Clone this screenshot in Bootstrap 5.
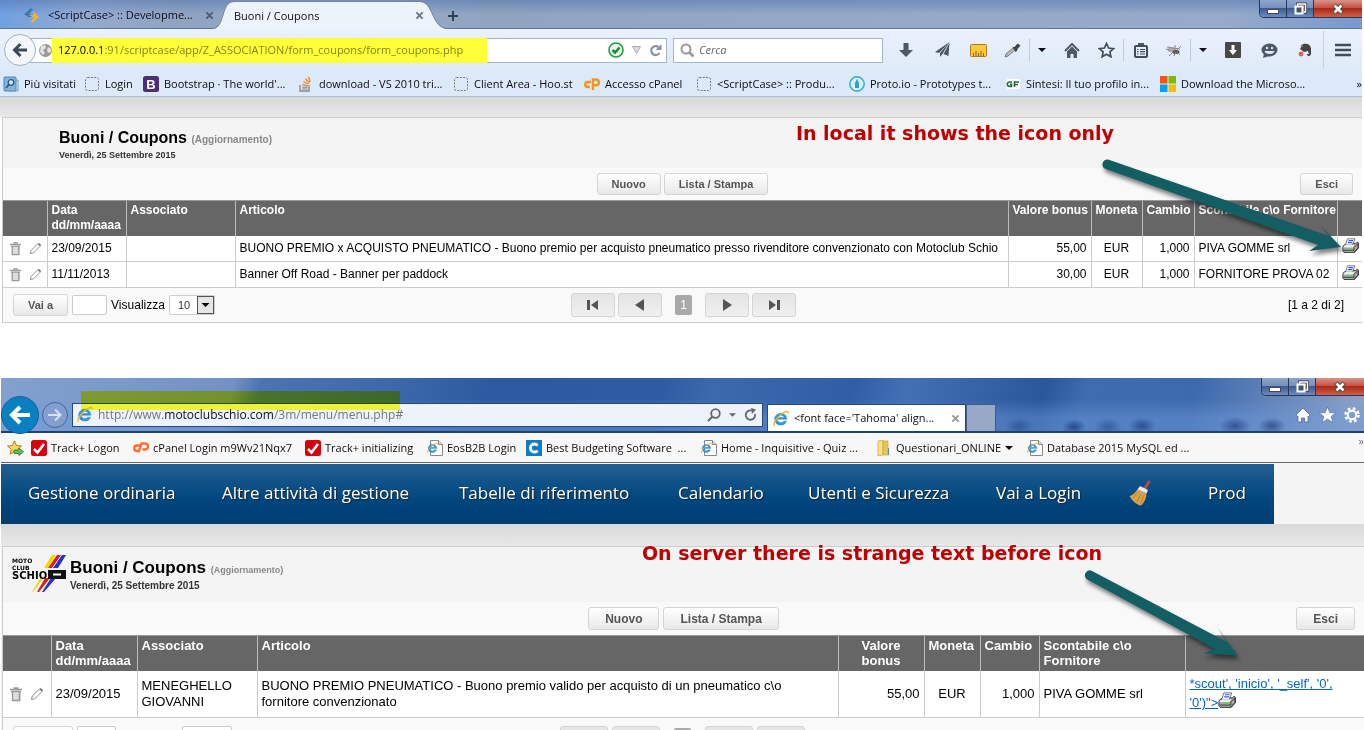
<!DOCTYPE html>
<html lang="it">
<head>
<meta charset="utf-8">
<meta name="viewport" content="width=device-width, initial-scale=1">
<title>Buoni / Coupons</title>
<link href="https://cdn.jsdelivr.net/npm/bootstrap@5.3.0/dist/css/bootstrap.min.css" rel="stylesheet">
<style>
body{background:#fff;color:#000;font-family:"Liberation Sans",Arial,sans-serif;font-size:12px;line-height:15px;height:100vh;overflow:hidden;display:flex;flex-direction:column}
button{border:0;background:none;padding:0;color:inherit;font:inherit}
svg{display:block;flex:none}
.chrome{font-family:"Open Sans","Noto Sans",sans-serif;font-size:11px;line-height:16px;color:#0c0c14}
.chrome a,.crumbs a{color:inherit;text-decoration:none;white-space:nowrap}
/* window buttons */
.winbtns{position:absolute;top:0;right:0;display:flex;height:18px;border:1px solid #27375c;border-top:0;border-right:0;border-radius:0 0 0 5px;overflow:hidden}
.winbtns button{width:27px;display:flex;align-items:center;justify-content:center;background:linear-gradient(#8fa6cc,#7690bd 45%,#3f5c92 50%,#6d8bbd);border-right:1px solid #27375c}
.winbtns button.closer{width:48px;background:linear-gradient(#d9958c,#c8503f 45%,#a92a18 50%,#d0604a);border:0}
/* first browser */
.fx{margin-right:2px;flex:none}
.fx-title{height:29px;background:linear-gradient(rgba(70,105,165,.45),rgba(150,170,200,0) 50%),linear-gradient(90deg,#6fa0e2,#93abd0 6%,#8ea3c0 14%,#9cb0cf 22%,#8ea4bf 36%,#93a9c6 60%,#95abc9 90%,#7898cf);border-bottom:1px solid #5d7794}
.fx-tab1{width:222px;padding:2px 0 0 24px}
.fx-tab2{width:218px;padding:2px 16px 0 12px;height:29px;margin-bottom:-1px}
.fx-tab2>svg{position:absolute;left:-10px;top:1px}
.fx-nav{height:42px;background:linear-gradient(#e9f1fb,#dfeaf8);padding-left:4px}
.fx-back{width:32px;height:32px;border-radius:50%;border:1px solid #9db0c6;background:#f3f7fc;display:flex;align-items:center;justify-content:center;z-index:1}
.fx-url{flex:1 1 0;height:25px;margin-left:-6px;border:1px solid #a3b5cb;background:#fff}
.fx-mark{background:#ffff3a;height:25px;width:435px;padding-left:6px;color:#000}
.fx-mark input{color:#84841a}
.bare{border:0;background:none;padding:0;outline:0;font:inherit;min-width:0;flex:1}
.fx-search{width:210px;height:25px;border:1px solid #a3b5cb;background:#fff;margin:0 5px 0 6px;padding-left:6px}
.fx-search input::placeholder{color:#666;font-style:italic;opacity:1}
.fx-icons button{height:22px;width:36px;display:flex;align-items:center;justify-content:center}
.fx-icons .narrow{width:33px}
.fx-icons .drop{width:25px;border-left:1px solid #bccadb}
.fx-icons .burger{width:39px;height:38px;border-left:1px solid #c6d3e3}
.fx-marks{height:26px;display:grid;grid-template-columns:81px 59px 155px 155px 131px 112px 153px 156px 155px 1fr auto;align-items:center;padding-left:3px;background:#dce9f8;border-bottom:1px solid #a9bdd4}
.bm{display:flex;align-items:center;gap:5px;white-space:nowrap}
.bm.ie-bm{gap:4px}
/* application panel */
.strip{height:20px;background:linear-gradient(#d9d9d9,#e8e8e8)}
.ie .strip{height:22px}
.panel{margin-left:2px;border:1px solid #ccc;border-right:0;background:#f9f9f9}
.panel-top{height:50px;background:#f4f4f4;padding:11px 0 0 56px}
.ie .panel-top{height:55px;padding:7px 0 0 9px}
.panel-top h1{font-size:16px;line-height:17px;font-weight:bold;margin:0}
.panel-top h1 small{font-size:10px;color:#888}
.panel-top p{font-size:9px;line-height:14px;font-weight:bold;color:#333;margin:0}
.ie .panel-top h1{font-size:17px;line-height:18px;padding-top:5px}
.ie .panel-top h1 small{font-size:9px}
.ie .panel-top p{font-size:10px}
.actions{height:32px;gap:3px}
.ie .actions{height:33px;gap:4px}
.gbtn{height:22px;border:1px solid #d4d4d4;border-radius:3px;background:linear-gradient(#fff,#e8e8e8);font-weight:bold;font-size:11px;color:#555;padding:0 14px;line-height:20px}
.ie .gbtn{height:23px;font-size:12px;padding:0 16px}
.leave{position:absolute;right:9px}
.grid-t{width:100%;table-layout:fixed;border-collapse:collapse;background:#fff;margin:0}
.grid-t th{background:#666;color:#fff;height:35px;padding:2px 4px 0;vertical-align:top;border-left:1px solid #bbb;border-top:1px solid #999;font-weight:bold}
.grid-t td{height:26px;padding:0 4px;border-left:1px solid #ccc;border-bottom:1px solid #ccc}
.grid-t td:first-child,.grid-t th:first-child{border-left:0}
.ie .grid-t{font-size:13px}
.ie .grid-t td{height:47px;line-height:16px}
.tools{display:flex;gap:7px;padding-left:2px}
.foot{height:34px;padding:0 0 0 10px}
.foot input,.pick{height:20px;width:35px;border:1px solid #ccc;border-radius:2px;background:#fff}
.pick{width:46px;position:relative}
.pick select{appearance:none;border:0;background:none;width:44px;height:18px;padding:0 0 0 8px;font-size:11px;color:#333}
.pick svg{position:absolute;right:0;top:0;pointer-events:none}
.nav-b{width:44px;height:24px;border:1px solid #d4d4d4;border-radius:3px;background:linear-gradient(#e4e4e4,#f0f0f0);display:flex;align-items:center;justify-content:center}
.page-no{width:17px;height:20px;border-radius:2px;background:#a9a9a9;color:#fff;text-align:center;line-height:20px;margin:0 10px}
.pager{position:absolute;left:568px;gap:3px}
.ie .pager{left:557px;gap:4px}
.ie .nav-b{width:48px}
.ie .foot input{width:39px}
.ie .foot .pick{width:50px;margin-left:66px;appearance:none}
/* second browser */
.ie{margin:55px 0 0 1px;flex:1 1 0;min-height:0;overflow:hidden;background:#f4f4f4}
.ie-title{height:55px;padding-top:20px;border-bottom:2px solid #20406f;background:
 radial-gradient(ellipse 14px 9px at 1018px 48px,rgba(30,60,120,.5),transparent),
 radial-gradient(ellipse 12px 8px at 1073px 49px,rgba(20,50,120,.7),transparent),
 radial-gradient(ellipse 14px 9px at 1107px 49px,rgba(30,60,120,.5),transparent),
 radial-gradient(ellipse 14px 9px at 1141px 48px,rgba(20,50,110,.6),transparent),
 radial-gradient(ellipse 16px 9px at 1234px 48px,rgba(20,50,110,.6),transparent),
 radial-gradient(ellipse 14px 9px at 1271px 48px,rgba(20,50,110,.6),transparent),
 linear-gradient(transparent 40%,rgba(110,155,220,.45) 75%),
 linear-gradient(105deg,#83a1cf,#7391c4 17%,#4a74b3 19%,#3e69ac 28%,#2b5aa0 36%,#2d5ca3 48%,#3b69ad 52%,#2f5ea6 62%,#4370b5 66%,#2a579c 76%,#3e6cb0 79%,#3d6aae 87%,#8ba0c4 99%)}
.ie-back{width:38px;height:38px;border-radius:50%;background:#0a80c2;border:1px solid #1b5d98;display:flex;align-items:center;justify-content:center}
.ie-fwd{width:26px;height:26px;border-radius:50%;border:1px solid #49659a;background:#829fd0;display:flex;align-items:center;justify-content:center;margin:0 4px 0 3px}
.ie-url{flex:1 1 0;height:24px;border:1px solid #24497f;background:#edf2fb;padding:0 5px 0 4px;font-size:12px;color:#777}
.ie-url b{font-weight:normal;color:#111}
.ie-tab{width:199px;height:27px;margin-left:4px;background:#fff;border:1px solid #24497f;border-bottom:0;align-self:flex-end;padding:0 5px}
.ie-new{width:30px;height:27px;background:#98a9c7;border:1px solid #3c5d92;border-bottom:0;align-self:flex-end}
.ie-side{width:368px;gap:8px;padding-right:4px}
.ie-mark{position:absolute;left:80px;top:13px;width:319px;height:19px;background:#ffff3a;mix-blend-mode:multiply;pointer-events:none}
.ie-marks{height:30px;background:#f7f7f7;border-bottom:1px solid #666;display:grid;grid-template-columns:24px 102px 172px 122px 99px 175px 175px 151px 1fr auto;align-items:center;padding-left:6px}
.crumbs{width:1273px;max-width:100%;height:60px;margin-top:1px;background:linear-gradient(#225f90,#00467e 60%,#003e70);display:grid;grid-template-columns:194px 237px 219px 130px 188px 132px 80px 1fr;align-items:center;padding:0 0 3px 27px;font-family:"Open Sans","Noto Sans",sans-serif;font-size:17px;line-height:24px;color:#fff;text-shadow:1px 1px 1px #222}
/* annotations */
.callout{position:absolute;font-family:"DejaVu Sans",Verdana,sans-serif;font-weight:bold;font-size:19px;line-height:24px;color:#c00000;white-space:nowrap;z-index:2}
.pointer{position:absolute;z-index:2;pointer-events:none;filter:drop-shadow(2px 4px 2px rgba(0,0,0,.5))}
.weird{color:#0563c1;text-decoration:underline}
.weird svg{display:inline-block;vertical-align:-2px}
</style>
</head>
<body>
<svg width="0" height="0" class="position-absolute" aria-hidden="true">
<defs>
<symbol id="x" viewBox="0 0 10 10"><path d="M1.5 1.5l7 7M8.500 1.500l-7 7" stroke="currentColor" stroke-width="2.200"/></symbol>
<symbol id="blank" viewBox="0 0 16 16"><rect x="1.500" y="1.500" width="13" height="13" rx="2" fill="none" stroke="#777" stroke-dasharray="2 1.300"/></symbol>
<symbol id="trash" viewBox="0 0 14 16"><path d="M3 5h9v9H3z" fill="#ddd"/><path d="M1 3.500h12M4.500 2h5M2 5.500h10M3.500 6v8.500h7V6" fill="none" stroke="#999" stroke-width="1.400"/></symbol>
<symbol id="pencil" viewBox="0 0 14 14"><path d="M1.500 12.500l.8-3.500L9.500 2l2.500 2.500-7.300 7.300z" fill="#fff" stroke="#888"/><path d="M9.500 2l1.300-1 2.400 2.300L12 4.500z" fill="#777"/></symbol>
<symbol id="printer" viewBox="0 0 17 16"><path d="M1 8l3.500-2.500h9L15.500 4l1 1.500V10l-4 4.500H2L.8 13z" fill="#aaa" stroke="#222" stroke-width=".8"/><path d="M5.500.8h7.500L10.500 7H3.500z" fill="#fff" stroke="#444" stroke-width=".7"/><path d="M6.500 2.600h4.500M5.800 4.600h4.500" stroke="#25f" stroke-width="1.100"/><path d="M1.500 8.500l2.500-1.700h8.500l-1.500 2.700H1.500z" fill="#eee"/><path d="M1.500 12.300h10.500V9.500L16 5.500V10l-4 4" fill="none" stroke="#333" stroke-width=".9"/><path d="M6.500 10.900h3.500" stroke="#2e2" stroke-width="1.300"/></symbol>
<symbol id="e" viewBox="0 0 18 18"><path d="M14.600 9.900H4.400c.1 2 1.700 3.400 3.700 3.400 1.400 0 2.600-.6 3.300-1.500h3c-1 2.700-3.400 4.200-6.200 4.200C4.500 16 1.700 13.200 1.700 9.700S4.600 3.400 8.300 3.400c3.800 0 6.400 2.700 6.300 6.500zM11.800 8c-.3-1.500-1.700-2.500-3.400-2.500S5.100 6.500 4.600 8z" fill="#2d9be0" stroke="#1673b5" stroke-width=".4"/><path d="M1.600 16.600C-.4 14.300 5 6.600 10.500 3.200c3.300-2 6.200-2.400 5.400.6" fill="none" stroke="#f0b429" stroke-width="1.500"/></symbol>
<symbol id="epage" viewBox="0 0 16 16"><path d="M3.500.5h8l4 4v11h-12z" fill="#fff" stroke="#888"/><path d="M11.500.5v4h4" fill="#ddd" stroke="#888"/><use href="#e" x="0" y="2" width="12" height="12"/></symbol>
<symbol id="track" viewBox="0 0 16 16"><rect width="16" height="16" rx="2.500" fill="#d6000f"/><path d="M3 9l3.500 3.500L13 4" fill="none" stroke="#fff" stroke-width="2.600"/></symbol>
<symbol id="caret" viewBox="0 0 8 4"><path d="M0 0h8L4 4z" fill="currentColor"/></symbol>
<symbol id="wmin" viewBox="0 0 14 14"><rect x="1.500" y="7.500" width="11" height="4" fill="#fff" stroke="#445"/></symbol>
<symbol id="wres" viewBox="0 0 14 14"><path d="M4.500 4V2h8v8h-2" fill="none" stroke="#334" stroke-width="3"/><path d="M4.500 4V2h8v8h-2" fill="none" stroke="#fff" stroke-width="1.500"/><rect x="2.500" y="4.500" width="7" height="7" fill="#456" stroke="#fff" stroke-width="2"/></symbol>
<symbol id="wx" viewBox="0 0 14 14"><path d="M3 3l8 8M11 3l-8 8" stroke="#444" stroke-width="4.500"/><path d="M3.500 3.500l7 7M10.500 3.500l-7 7" stroke="#fff" stroke-width="2.600"/></symbol>
<symbol id="first" viewBox="0 0 12 12"><path d="M0 1h3v10H0zM11 1v10L4 6z" fill="#555"/></symbol>
<symbol id="prev" viewBox="0 0 12 12"><path d="M10 0v12L1 6z" fill="#555"/></symbol>
</defs>
</svg>

<section class="fx">
 <div class="chrome">
  <div class="fx-title d-flex position-relative">
   <div class="fx-tab1 d-flex align-items-center"><svg width="16" height="16" viewBox="0 0 16 16"><path d="M7 1l2 2-4 4 5 1-1 2H4L0 7z" fill="#3c79b8"/><path d="M9 4l6 6-7 6-1-2 3-3-5-3h5z" fill="#f5b32b"/></svg><a href="#" class="ms-2 me-auto ps-0">&lt;ScriptCase&gt; :: Developme...</a><button aria-label="Chiudi scheda" class="me-2" style="color:#4e5f74"><svg width="9" height="9"><use href="#x"/></svg></button></div>
   <div class="fx-tab2 d-flex align-items-center position-relative">
    <svg width="238" height="29" viewBox="0 0 238 29" aria-hidden="true"><path d="M0 28C14 28 8 1 22 1H208C222 1 219 28 236 28V29H0z" fill="#edf3fb"/><path d="M0 27.500C14 27.500 8 .5 22 .5H208C222 .5 219 27.500 236 27.500" fill="none" stroke="#6f87a5"/></svg>
    <a href="#" class="position-relative me-auto">Buoni / Coupons</a><button aria-label="Chiudi scheda" class="position-relative" style="color:#707b88"><svg width="9" height="9"><use href="#x"/></svg></button></div>
   <button aria-label="Nuova scheda" class="ms-2 pt-1"><svg width="10" height="10" viewBox="0 0 10 10"><path d="M5 0v10M0 5h10" stroke="#33404e" stroke-width="2"/></svg></button>
   <div class="winbtns"><button aria-label="Riduci"><svg width="14" height="14"><use href="#wmin"/></svg></button><button aria-label="Ripristina"><svg width="14" height="14"><use href="#wres"/></svg></button><button class="closer" aria-label="Chiudi"><svg width="14" height="14"><use href="#wx"/></svg></button></div>
  </div>
  <div class="fx-nav d-flex align-items-center">
   <button class="fx-back" aria-label="Indietro"><svg width="16" height="16" viewBox="0 0 16 16"><path d="M15 8H3M8.500 2L2.500 8l6 6" fill="none" stroke="#3c4a58" stroke-width="3"/></svg></button>
   <div class="fx-url d-flex align-items-center ps-2">
    <svg width="13" height="13" viewBox="0 0 13 13"><circle cx="6.500" cy="6.500" r="6.500" fill="#999"/><path d="M2 2l4-1 1 3-3 2 2 3-2 2-3-3zM9 3l3 2v3l-3 1-1-3z" fill="#e4e4e4"/></svg>
    <div class="fx-mark d-flex align-items-center"><label for="u1">127.0.0.1</label><input id="u1" class="bare" value=":91/scriptcase/app/Z_ASSOCIATION/form_coupons/form_coupons.php"></div>
    <svg class="ms-auto" width="16" height="16" viewBox="0 0 16 16"><circle cx="8" cy="8" r="7" fill="#e9f8ec" stroke="#1a9e3f" stroke-width="1.600"/><path d="M4.500 8L7 10.500l4.500-5" fill="none" stroke="#1a8f35" stroke-width="2.600"/></svg>
    <svg class="mx-2" width="9" height="8" viewBox="0 0 9 8"><path d="M.5.500h8l-4 7z" fill="#d9dde3" stroke="#aab"/></svg>
    <button aria-label="Ricarica" class="me-1"><svg width="13" height="13" viewBox="0 0 13 13"><path d="M10.500 9A4.500 4.500 0 1 1 9.500 3" fill="none" stroke="#8a93a0" stroke-width="2.200"/><path d="M12.500 0v6h-6z" fill="#8a93a0"/></svg></button>
   </div>
   <div class="fx-search d-flex align-items-center"><svg class="me-1" width="15" height="15" viewBox="0 0 15 15"><circle cx="6" cy="6" r="4.500" fill="none" stroke="#999" stroke-width="2"/><path d="M9.500 9.500l4 4" stroke="#999" stroke-width="2.600"/></svg><input class="bare" aria-label="Cerca" placeholder="Cerca"></div>
   <div class="fx-icons d-flex align-items-center">
    <button aria-label="Download"><svg width="14" height="15" viewBox="0 0 14 15"><path d="M4.500 0h5v7H14l-7 7-7-7h4.500z" fill="#4d5864"/></svg></button>
    <button aria-label="Invia"><svg width="15" height="16" viewBox="0 0 15 16"><path d="M14.500 0L0 10l4 1zM14.500 0L5 11v4l2.500-3zM14.500 1l-6 11 5 2z" fill="#4d5864"/></svg></button>
    <button aria-label="Righello"><svg width="17" height="13" viewBox="0 0 17 13"><rect x=".5" y=".5" width="16" height="12" rx="1" fill="#fbc83c" stroke="#a87a24"/><path d="M3.500 12V9M6 12V7M8.500 12V9M11 12V7M13.500 12V9" stroke="#8a641d"/></svg></button>
    <button class="narrow" aria-label="Contagocce"><svg width="17" height="15" viewBox="0 0 17 15"><path d="M1 14l1-3 7-6 2 2-7 6z" fill="#bbb" stroke="#777"/><path d="M8.500 4l2 0 3-3.500 3 2-3 3.500-.5 2-1.500 1z" fill="#444"/></svg></button>
    <button class="drop" aria-label="Menu"><svg width="8" height="4"><use href="#caret"/></svg></button>
    <button aria-label="Home"><svg width="16" height="15" viewBox="0 0 16 15"><path d="M1 8l7-7 7 7" fill="none" stroke="#4d5864" stroke-width="2"/><path d="M3 8.500l5-5 5 5V15H9.500v-4h-3v4H3z" fill="#4d5864"/></svg></button>
    <button class="narrow" aria-label="Preferiti"><svg width="17" height="16" viewBox="0 0 17 16"><path d="M8.500 1.500l2.100 4.500 5 .6-3.700 3.300 1 4.900-4.400-2.500-4.400 2.500 1-4.900L1.400 6.600l5-.6z" fill="#e6eef8" stroke="#414c58" stroke-width="1.700"/></svg></button>
    <button class="drop" style="width:34px" aria-label="Elenco"><svg width="14" height="15" viewBox="0 0 14 15"><path d="M4 0h6v3H4z" fill="#4d5864"/><rect x="1" y="3" width="12" height="11" rx="1" fill="none" stroke="#414c58" stroke-width="2"/><path d="M3 6.500h1.500M6 6.500h5M3 8.700h1.500M6 8.700h5M3 11h1.500M6 11h5" stroke="#414c58" stroke-width="1.200"/></svg></button>
    <button class="narrow" aria-label="Debug"><svg width="16" height="13" viewBox="0 0 16 13"><ellipse cx="6" cy="6" rx="4.500" ry="2.200" fill="#aaa"/><ellipse cx="10" cy="8" rx="3.500" ry="2" fill="#555"/><path d="M1 3l13 2M3 12l4-4M8 12l2-4M9 1v4M14 11l-3-3M15 2l-4 4M0 5l4 1" stroke="#888"/></svg></button>
    <button class="drop" aria-label="Menu"><svg width="8" height="4"><use href="#caret"/></svg></button>
    <button aria-label="Scarica"><svg width="16" height="16" viewBox="0 0 16 16"><rect width="16" height="16" rx="1" fill="#484848"/><path d="M6.500 3h3v5H12l-4 5-4-5h2.500z" fill="#fff"/></svg></button>
    <button aria-label="Chat"><svg width="17" height="15" viewBox="0 0 17 15"><ellipse cx="8.500" cy="7" rx="8" ry="6.500" fill="#4d5864"/><path d="M3 11l-1 4 6-2z" fill="#4d5864"/><circle cx="6" cy="5" r="1.200" fill="#dce9f8"/><circle cx="11" cy="5" r="1.200" fill="#dce9f8"/><path d="M3.500 8h10c-1 4-9 4-10 0z" fill="#dce9f8"/></svg></button>
    <button aria-label="Evernote"><svg width="14" height="14" viewBox="0 0 14 14"><path d="M5 1c4-1 7 0 8 4v5c0 4-4 4-4 1h2l-1-3-4 1-4-3z" fill="#444"/><circle cx="3" cy="11" r="2.400" fill="#e0604a"/><path d="M2 3l3-2v3z" fill="#777"/></svg></button>
    <button class="burger" aria-label="Apri menu"><svg width="16" height="14" viewBox="0 0 16 14"><path d="M0 2h16M0 7h16M0 12h16" stroke="#414c58" stroke-width="2.600"/></svg></button>
   </div>
  </div>
  <div class="fx-marks">
   <a class="bm" href="#"><svg width="16" height="16" viewBox="0 0 16 16"><rect x="1" y="1" width="12" height="14" rx="1" fill="#84b5d8" stroke="#4b86b4"/><path d="M13 4h2v11H6" fill="none" stroke="#6aa0c8"/><circle cx="8" cy="6.500" r="2.800" fill="#cfe6f6" stroke="#235d8a" stroke-width="1.300"/><path d="M6 8.500L3 12" stroke="#235d8a" stroke-width="1.700"/></svg>Più visitati</a>
   <a class="bm" href="#"><svg width="16" height="16"><use href="#blank"/></svg>Login</a>
   <a class="bm" href="#"><svg width="16" height="16" viewBox="0 0 16 16"><rect width="16" height="16" rx="2.500" fill="#4d2d76"/><text x="8" y="13" text-anchor="middle" font-family="Liberation Sans" font-weight="bold" font-size="13" fill="#fff">B</text></svg>Bootstrap · The world'...</a>
   <a class="bm" href="#"><svg width="16" height="16" viewBox="0 0 16 16"><path d="M2 9v6h9V9" fill="none" stroke="#888" stroke-width="1.300"/><path d="M4 13h5.500M4 11l5.500.4" stroke="#888" stroke-width="1.200"/><path d="M4.300 8.300l5.400 1.500M5.400 5.500l4.900 2.800M7.500 2.800l3.800 4.200M10.500 1l1.800 5" stroke="#f48024" stroke-width="1.300"/></svg>download - VS 2010 tri...</a>
   <a class="bm" href="#"><svg width="16" height="16"><use href="#blank"/></svg>Client Area - Hoo.st</a>
   <a class="bm" href="#"><svg width="16" height="16" viewBox="0 0 16 16"><path d="M7 6H3.800a2.200 2.200 0 0 0 0 5H6M9 14V3.500h3a2.800 2.800 0 0 1 0 5.700H9" fill="none" stroke="#f7931e" stroke-width="2.500"/></svg>Accesso cPanel</a>
   <a class="bm" href="#"><svg width="16" height="16"><use href="#blank"/></svg>&lt;ScriptCase&gt; :: Produ...</a>
   <a class="bm" href="#"><svg width="16" height="16" viewBox="0 0 16 16"><circle cx="8" cy="8" r="7.200" fill="#d5eff7" stroke="#35a8c8" stroke-width="1.400"/><path d="M6 12V7l2-4 2 4v5z" fill="#2f9ec0"/></svg>Proto.io - Prototypes t...</a>
   <a class="bm" href="#"><svg width="16" height="16" viewBox="0 0 16 16"><rect x="1" y="3" width="14" height="10" rx="2" fill="#fff"/><path d="M7 6H4.500a2 2 0 0 0 0 4.300H6.500V8.300H5M9.500 11V6H14M9.500 8.500h3.500" fill="none" stroke="#2d6b38" stroke-width="1.700"/></svg>Sintesi: Il tuo profilo in...</a>
   <a class="bm" href="#"><svg width="16" height="16" viewBox="0 0 16 16"><path d="M0 0h7.500v7.500H0z" fill="#f65314"/><path d="M8.500 0H16v7.500H8.500z" fill="#7cbb00"/><path d="M0 8.500h7.500V16H0z" fill="#00a1f1"/><path d="M8.500 8.500H16V16H8.500z" fill="#ffbb00"/></svg>Download the Microso...</a>
   <a href="#">»</a>
  </div>
 </div>
 <div class="strip"></div>
 <div class="panel position-relative">
  <div class="panel-top"><h1>Buoni / Coupons <small>(Aggiornamento)</small></h1><p>Venerdì, 25 Settembre 2015</p></div>
  <div class="actions d-flex justify-content-center align-items-center position-relative"><button class="gbtn">Nuovo</button><button class="gbtn">Lista / Stampa</button><button class="gbtn leave">Esci</button></div>
  <table class="grid-t">
   <colgroup><col style="width:44px"><col style="width:79px"><col style="width:109px"><col><col style="width:83px"><col style="width:51px"><col style="width:52px"><col style="width:143px"><col style="width:25px"></colgroup>
   <thead><tr><th></th><th>Data dd/mm/aaaa</th><th>Associato</th><th>Articolo</th><th class="text-nowrap">Valore bonus</th><th>Moneta</th><th>Cambio</th><th class="text-nowrap">Scontabile c\o Fornitore</th><th></th></tr></thead>
   <tbody>
    <tr><td><div class="tools"><button aria-label="Elimina"><svg width="13" height="15"><use href="#trash"/></svg></button><button aria-label="Modifica"><svg width="13" height="13"><use href="#pencil"/></svg></button></div></td><td>23/09/2015</td><td></td><td class="text-nowrap">BUONO PREMIO x ACQUISTO PNEUMATICO - Buono premio per acquisto pneumatico presso rivenditore convenzionato con Motoclub Schio</td><td class="text-end">55,00</td><td class="text-center">EUR</td><td class="text-end">1,000</td><td>PIVA GOMME srl</td><td><button aria-label="Stampa"><svg width="17" height="16"><use href="#printer"/></svg></button></td></tr>
    <tr><td><div class="tools"><button aria-label="Elimina"><svg width="13" height="15"><use href="#trash"/></svg></button><button aria-label="Modifica"><svg width="13" height="13"><use href="#pencil"/></svg></button></div></td><td>11/11/2013</td><td></td><td>Banner Off Road - Banner per paddock</td><td class="text-end">30,00</td><td class="text-center">EUR</td><td class="text-end">1,000</td><td class="text-nowrap">FORNITORE PROVA 02</td><td><button aria-label="Stampa"><svg width="17" height="16"><use href="#printer"/></svg></button></td></tr>
   </tbody>
  </table>
  <div class="foot d-flex align-items-center position-relative">
   <button class="gbtn me-1">Vai a</button><input aria-label="Vai a"><label for="rows1" class="mx-1">Visualizza</label>
   <span class="pick"><select id="rows1"><option>10</option></select><svg width="17" height="18" viewBox="0 0 17 18"><rect x=".5" y=".5" width="16" height="17" fill="#e6e6e6" stroke="#555"/><path d="M4.500 7h8l-4 4z"/></svg></span>
   <div class="pager d-flex align-items-center"><button class="nav-b" aria-label="Prima"><svg width="12" height="12"><use href="#first"/></svg></button><button class="nav-b" aria-label="Precedente"><svg width="12" height="12"><use href="#prev"/></svg></button><span class="page-no">1</span><button class="nav-b" aria-label="Successiva"><svg width="12" height="12" viewBox="0 0 12 12"><path d="M2 0v12l9-6z" fill="#555"/></svg></button><button class="nav-b" aria-label="Ultima"><svg width="12" height="12" viewBox="0 0 12 12"><path d="M9 1h3v10H9zM1 1v10l7-5z" fill="#555"/></svg></button></div>
   <span class="ms-auto" style="margin-right:18px">[1 a 2 di 2]</span>
  </div>
  <div class="callout" style="right:248px;top:3px">In local it shows the icon only</div>
  <svg class="pointer" style="right:20px;top:40px" width="242" height="96" viewBox="1100 158 242 96"><path d="M1108 159.500L1329 236 1319 224 1341 247 1309 251 1318 245 1104.500 168.500A5 5 0 0 1 1108 159.500z" fill="#125e63"/></svg>
 </div>
</section>

<section class="ie">
 <div class="chrome">
  <div class="ie-title d-flex align-items-center position-relative">
   <button class="ie-back" aria-label="Indietro"><svg width="22" height="20" viewBox="0 0 22 20"><path d="M21 10H3M11 2l-8 8 8 8" fill="none" stroke="#fff" stroke-width="4"/></svg></button>
   <button class="ie-fwd" aria-label="Avanti"><svg width="16" height="14" viewBox="0 0 16 14"><path d="M1 7h12M8 1.500L13.500 7 8 12.500" fill="none" stroke="#d7e2f5" stroke-width="2"/></svg></button>
   <div class="ie-url d-flex align-items-center"><svg width="17" height="17"><use href="#e"/></svg><label class="ms-1" for="u2">http://www.<b>motoclubschio.com</b></label><input id="u2" class="bare" style="color:#777" value="/3m/menu/menu.php#">
    <button aria-label="Cerca"><svg width="14" height="14" viewBox="0 0 14 14"><circle cx="8.500" cy="5.500" r="4.300" fill="none" stroke="#666" stroke-width="1.800"/><path d="M5.500 8.500L1 13" stroke="#666" stroke-width="2"/></svg></button><svg class="mx-2" style="color:#666" width="7" height="4"><use href="#caret"/></svg><button aria-label="Aggiorna"><svg width="13" height="13" viewBox="0 0 13 13"><path d="M11 6A4.700 4.700 0 1 1 7.500 2.500" fill="none" stroke="#666" stroke-width="1.800"/><path d="M7 0l5 1.500L8 6z" fill="#666"/></svg></button></div>
   <div class="ie-tab d-flex align-items-center"><svg width="17" height="17"><use href="#e"/></svg><a href="#" class="ms-1 me-auto">&lt;font face='Tahoma' align...</a><button aria-label="Chiudi scheda" style="color:#999"><svg width="9" height="9"><use href="#x"/></svg></button></div>
   <button class="ie-new" aria-label="Nuova scheda"></button>
   <div class="ie-side d-flex justify-content-end align-items-center">
    <button aria-label="Home"><svg width="16" height="16" viewBox="0 0 16 16"><path d="M8 1l7 7-1.500 1.500L13 9v6H9.500v-4h-3v4H3V9l-.5.500L1 8z" fill="#fff" stroke="#3a5a92" stroke-width=".7"/></svg></button>
    <button aria-label="Preferiti"><svg width="17" height="16" viewBox="0 0 17 16"><path d="M8.500 0l2.300 5.800h6L12.100 9.500l1.700 6-5.300-3.400-5.300 3.400 1.700-6L.2 5.800h6z" fill="#fff" stroke="#3a5a92" stroke-width=".5"/></svg></button>
    <button aria-label="Strumenti"><svg width="16" height="16" viewBox="0 0 16 16"><circle cx="8" cy="8" r="6.500" fill="none" stroke="#fff" stroke-width="2.600" stroke-dasharray="2.700 2.400"/><circle cx="8" cy="8" r="4.200" fill="none" stroke="#fff" stroke-width="2"/></svg></button></div>
   <div class="ie-mark"></div>
   <div class="winbtns"><button aria-label="Riduci"><svg width="14" height="14"><use href="#wmin"/></svg></button><button aria-label="Ripristina"><svg width="14" height="14"><use href="#wres"/></svg></button><button class="closer" aria-label="Chiudi"><svg width="14" height="14"><use href="#wx"/></svg></button></div>
  </div>
  <div class="ie-marks">
   <button aria-label="Aggiungi ai preferiti"><svg width="17" height="16" viewBox="0 0 17 16"><path d="M7.500.8l2 4.700 5 .5-3.800 3.200 1.200 5-4.400-2.700-4.400 2.700 1.200-5L.5 6l5-.5z" fill="#fcd95a" stroke="#a8841c"/><path d="M7 10h5V8l4.500 3.800L12 15.500v-2H7z" fill="#5fc04e" stroke="#2e7d32" stroke-width=".8"/></svg></button>
   <a class="bm ie-bm" href="#"><svg width="16" height="16"><use href="#track"/></svg>Track+ Logon</a>
   <a class="bm ie-bm" href="#"><svg width="16" height="16" viewBox="0 0 16 16"><path d="M7 5.500H4a2.700 2.700 0 0 0 0 5.500h2L8.500 3.500h3.500a3 3 0 0 1 0 6H9.500" fill="none" stroke="#ff6c2c" stroke-width="2.300"/></svg>cPanel Login m9Wv21Nqx7</a>
   <a class="bm ie-bm" href="#"><svg width="16" height="16"><use href="#track"/></svg>Track+ initializing</a>
   <a class="bm ie-bm" href="#"><svg width="16" height="16"><use href="#epage"/></svg>EosB2B Login</a>
   <a class="bm ie-bm" href="#"><svg width="16" height="16" viewBox="0 0 16 16"><path d="M0 0h16v16H0z" fill="#137bc1"/><path d="M11.500 5.500a4 4 0 1 0 0 5" fill="none" stroke="#fff" stroke-width="2.800"/></svg>Best Budgeting Software &nbsp;...</a>
   <a class="bm ie-bm" href="#"><svg width="16" height="16"><use href="#epage"/></svg>Home - Inquisitive - Quiz ...</a>
   <a class="bm ie-bm" href="#"><svg width="16" height="16" viewBox="0 0 16 16"><path d="M2 1l5-1v15l-5 1z" fill="#f7e08a" stroke="#c9a43c" stroke-width=".7"/><path d="M7 1h5v14H7z" fill="#e8c654" stroke="#c9a43c" stroke-width=".7"/><path d="M12.500 8v7" stroke="#58b"/></svg>Questionari_ONLINE <svg width="8" height="4"><use href="#caret"/></svg></a>
   <a class="bm ie-bm" href="#"><svg width="16" height="16"><use href="#epage"/></svg>Database 2015 MySQL ed ...</a>
   <a href="#" class="align-self-start" style="color:#6b6bb0">»</a>
  </div>
 </div>
 <nav class="crumbs"><a href="#">Gestione ordinaria</a><a href="#">Altre attività di gestione</a><a href="#">Tabelle di riferimento</a><a href="#">Calendario</a><a href="#">Utenti e Sicurezza</a><a href="#">Vai a Login</a><a href="#" aria-label="Pulisci"><svg width="24" height="26" viewBox="0 0 24 26"><path d="M21.500 1l-5 8" stroke="#c44a42" stroke-width="2.600"/><path d="M12 6l8 4-1.500 3.500-9-4z" fill="#e9eef6"/><path d="M9.500 9l9 4.500c0 4-2 9-5.500 12C9 25 4 21 1.500 16 5 15 8 12 9.500 9z" fill="#d9a14a"/><path d="M10 12l-5 6M13 14l-4 8M16 15l-3.500 9" stroke="#bd8436"/></svg></a><a href="#">Prod</a></nav>
 <div class="strip"></div>
 <div class="panel position-relative" style="margin-left:1px">
  <div class="panel-top d-flex"><svg width="54" height="40" viewBox="0 0 54 40" class="me-1"><path d="M40 1h4L36 14h-4zM32 23h-3L20 38h1z" fill="#f2d800"/><path d="M45 1h4L40 14h-4zM38 24h-5L25 38h2z" fill="#d92020"/><path d="M50 1h4L46 14h-5zM44 24h-5L30 38h2z" fill="#2330d8"/><g font-family="DejaVu Sans" font-weight="bold"><text x="0" y="9" font-size="6">MOTO</text><text x="0" y="16" font-size="6">CLUB</text><text x="0" y="25" font-size="10">SCHIO</text></g><path d="M36 16h18v9H36z" fill="#111"/><path d="M41 20.500h8" stroke="#fff" stroke-width="2"/></svg><div><h1>Buoni / Coupons <small>(Aggiornamento)</small></h1><p>Venerdì, 25 Settembre 2015</p></div></div>
  <div class="actions d-flex justify-content-center align-items-center position-relative"><button class="gbtn">Nuovo</button><button class="gbtn">Lista / Stampa</button><button class="gbtn leave">Esci</button></div>
  <table class="grid-t">
   <colgroup><col style="width:48px"><col style="width:86px"><col style="width:120px"><col><col style="width:86px"><col style="width:56px"><col style="width:59px"><col style="width:146px"><col style="width:179px"></colgroup>
   <thead><tr><th></th><th>Data<br>dd/mm/aaaa</th><th>Associato</th><th>Articolo</th><th class="text-center">Valore<br>bonus</th><th>Moneta</th><th>Cambio</th><th>Scontabile c\o<br>Fornitore</th><th></th></tr></thead>
   <tbody><tr><td><div class="tools"><button aria-label="Elimina"><svg width="14" height="16"><use href="#trash"/></svg></button><button aria-label="Modifica"><svg width="14" height="14"><use href="#pencil"/></svg></button></div></td><td>23/09/2015</td><td>MENEGHELLO GIOVANNI</td><td>BUONO PREMIO PNEUMATICO - Buono premio valido per acquisto di un pneumatico c\o<br>fornitore convenzionato</td><td class="text-end">55,00</td><td class="text-center">EUR</td><td class="text-end">1,000</td><td>PIVA GOMME srl</td><td><a class="weird" href="#">*scout', 'inicio', '_self', '0',<br>'0')"&gt;<svg width="18" height="17"><use href="#printer"/></svg></a></td></tr></tbody>
  </table>
  <div class="foot d-flex align-items-start position-relative pt-2"><button class="gbtn me-1" style="width:60px" aria-label="Vai a"></button><input aria-label="Pagina"><select class="pick" aria-label="Righe"></select>
   <div class="pager d-flex align-items-center"><button class="nav-b" aria-label="Prima"></button><button class="nav-b" aria-label="Precedente"></button><span class="page-no"></span><button class="nav-b" aria-label="Successiva"></button><button class="nav-b" aria-label="Ultima"></button></div></div>
  <div class="callout" style="right:262px;top:-6px">On server there is strange text before icon</div>
  <svg class="pointer" style="right:126px;top:22px" width="154" height="90" viewBox="1084 569 154 90"><path d="M1091 570.500L1227 642 1217 627 1237.500 655.500 1203 653.500 1215 649 1086.500 579A5 5 0 0 1 1091 570.500z" fill="#125e63"/></svg>
 </div>
</section>
<script src="https://cdn.jsdelivr.net/npm/bootstrap@5.3.0/dist/js/bootstrap.bundle.min.js"></script>
</body>
</html>
